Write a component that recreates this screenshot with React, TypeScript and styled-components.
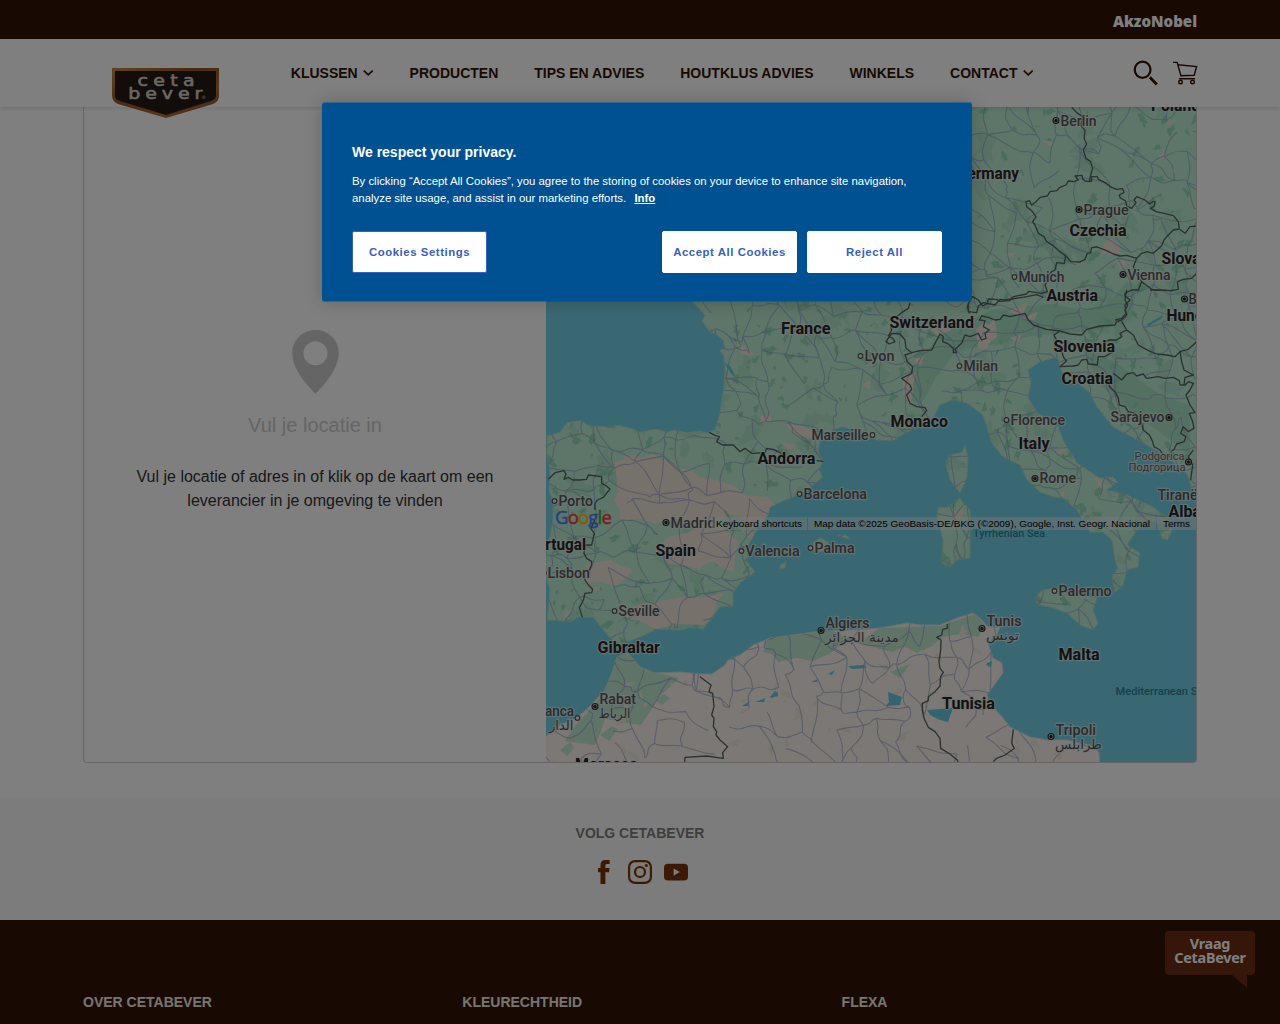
import React from "react";
import styled, { createGlobalStyle } from "styled-components";

const sans = '"Liberation Sans", Arial, sans-serif';

const GlobalStyle = createGlobalStyle`
  * { box-sizing: border-box; }
  html, body { margin: 0; height: 100%; overflow: hidden; background: #fff; }
  body { font-family: ${sans}; }
  h2, h3, p { margin: 0; font-weight: inherit; }
  button { font-family: inherit; cursor: pointer; }
`;

const Page = styled.div`
  position: relative;
  display: flex;
  flex-direction: column;
  height: 1024px;
  overflow: hidden;
`;

const Container = styled.div`
  width: 1114px;
  margin: 0 auto;
  display: flex;
`;

const TopBar = styled.div`
  height: 39px;
  background: #301404;
  flex: none;
`;

const TopBarInner = styled(Container)`
  height: 100%;
  justify-content: flex-end;
  padding-top: 11px;
`;

const Header = styled.header`
  height: 68px;
  flex: none;
  z-index: 2;
  background: #fff;
  box-shadow: 0 1px 4px rgba(0, 0, 0, 0.14);
`;

const HeaderInner = styled(Container)`
  align-items: flex-start;
`;

const LogoLink = styled.a`
  display: block;
  width: 107px;
  height: 50px;
  margin: 29px 71.8px 0 29px;
`;

const Nav = styled.nav`
  display: flex;
  gap: 36px;
  padding-top: 24px;
  flex: 1;
`;

const NavItem = styled.a`
  display: flex;
  align-items: center;
  gap: 5.4px;
  height: 20px;
  color: #301404;
  font-size: 14px;
  font-weight: 700;
  white-space: nowrap;
`;

const Tools = styled.div`
  display: flex;
  gap: 14.5px;
  padding-top: 21px;
  margin-right: -1px;
`;

const Main = styled.main`
  height: 691px;
  flex: none;
`;

const Locator = styled(Container)`
  height: 656px;
  border: 1px solid #ccc;
  border-top: 0;
  border-radius: 0 0 4px 4px;
  overflow: hidden;
`;

const Intro = styled.section`
  width: 462px;
  display: flex;
  flex-direction: column;
  align-items: center;
  padding-top: 222px;
  text-align: center;
`;

const IntroTitle = styled.h2`
  margin-top: 16px;
  font-size: 20px;
  line-height: 28px;
  color: #cbcbcb;
`;

const IntroText = styled.p`
  width: 380px;
  margin-top: 26px;
  font-size: 16px;
  line-height: 24px;
  color: #333;
`;

const MapPane = styled.section`
  position: relative;
  width: 650px;
  height: 655px;
  overflow: hidden;
`;

const GoogleMark = styled.div`
  position: absolute;
  left: 9px;
  top: 397px;
  font: 500 18.5px/26px "Open Sans", sans-serif;
  letter-spacing: -0.8px;
`;

const Tint = styled.span<{ $c: string }>`
  color: ${(p) => p.$c};
  -webkit-text-stroke: 0.5px ${(p) => p.$c};
`;

const Attribution = styled.div`
  position: absolute;
  right: 0;
  top: 410px;
  display: flex;
  gap: 1px;
  height: 13px;
`;

const Credit = styled.span<{ $w: number }>`
  width: ${(p) => p.$w}px;
  background: rgba(245, 245, 245, 0.45);
  color: #000;
  font-size: 9.97px;
  line-height: 14px;
  text-align: center;
  white-space: nowrap;
`;

const Follow = styled.section`
  height: 122px;
  flex: none;
  background: #f8f8f8;
  display: flex;
  flex-direction: column;
  align-items: center;
  padding-top: 25px;
`;

const FollowTitle = styled.h3`
  font-size: 14px;
  line-height: 20px;
  font-weight: 700;
  color: #7d7d7d;
`;

const Socials = styled.div`
  display: flex;
  gap: 12px;
  margin-top: 17px;
`;

const Footer = styled.footer`
  position: relative;
  flex: 1;
  background: #301404;
`;

const FooterInner = styled(Container)`
  padding-top: 72px;
`;

const FooterHeading = styled.h3`
  flex: 0 0 379.3px;
  &:last-child { flex: 1; }
  color: #f0e9e5;
  font-size: 14px;
  line-height: 20px;
  font-weight: 700;
  white-space: nowrap;
`;

const ChatTag = styled.div`
  position: absolute;
  top: 10.5px;
  right: 25px;
  width: 90px;
  height: 44px;
  border-radius: 4px;
  background: #6c2c10;
  color: #fff;
  text-align: center;
  padding-top: 6px;
  font: 700 14.4px/14px "Noto Sans", sans-serif;
  letter-spacing: -0.25px;
  &::after {
    content: "";
    position: absolute;
    right: 8px;
    top: 44px;
    border-top: 13px solid #6c2c10;
    border-left: 15px solid transparent;
  }
`;

const Backdrop = styled.div`
  position: absolute;
  inset: 0;
  z-index: 5;
  background: rgba(0, 0, 0, 0.5);
`;

const Consent = styled.div`
  position: absolute;
  left: 322px;
  top: 102px;
  z-index: 6;
  width: 650px;
  height: 200px;
  padding: 40.4px 30px 0;
  border: solid rgba(0, 81, 146, 0.5);
  border-width: 1px 0;
  border-radius: 2.5px;
  background: #005192 padding-box;
  color: #fff;
  box-shadow: 0 0 18px rgba(0, 0, 0, 0.2);
`;

const ConsentTitle = styled.h2`
  margin-top: -1px;
  font-size: 14px;
  line-height: 20px;
  font-weight: 700;
`;

const ConsentText = styled.p`
  margin-top: 11px;
  font-size: 11.38px;
  line-height: 17px;
  white-space: nowrap;
`;

const InfoLink = styled.a`
  margin-left: 5px;
  font-weight: 700;
  text-decoration: underline;
`;

const Actions = styled.div`
  display: flex;
  gap: 10px;
  margin-top: 24px;
`;

const ConsentButton = styled.button<{ $settings?: boolean }>`
  width: 135px;
  height: 42px;
  padding: 0;
  margin-right: ${(p) => (p.$settings ? "165px" : 0)};
  border: 1px solid ${(p) => (p.$settings ? "#3860be" : "#fff")};
  border-radius: 2px;
  background: #fff;
  color: #3860be;
  font-size: 11.38px;
  font-weight: 700;
  letter-spacing: 0.56px;
  white-space: nowrap;
`;

/* ---------- icons ---------- */

const Chevron = () => (
  <svg width="10.5" height="8" viewBox="0 0 10.5 8" fill="none" stroke="#301404" strokeWidth="1.7">
    <path d="M.8 1.6 5.2 5.8 9.7 1.6" />
  </svg>
);

const SearchIcon = () => (
  <svg width="26" height="26" viewBox="0 0 26 26" fill="none" stroke="#301404">
    <ellipse cx="9.6" cy="9.8" rx="7.9" ry="8.1" strokeWidth="2.2" />
    <path d="m16.8 17.2 7 7.2" strokeWidth="2.9" />
  </svg>
);

const CartIcon = () => (
  <svg width="25" height="25" viewBox="0 0 25 25" fill="none" stroke="#301404" strokeWidth="1.4">
    <path d="M0 2.4h4.2l3.7 13.4 13.3-.5L23.6 6.6 5 4.8M6 18.8h16" />
    <circle cx="7.5" cy="22" r="1.8" />
    <circle cx="19.5" cy="22" r="1.8" />
  </svg>
);

const PinIcon = () => (
  <svg width="48" height="66" viewBox="-.5 0 48 66">
    <path
      fill="#cbcbcb"
      fillRule="evenodd"
      d="M24 1C11 1 .8 11 .8 24 .8 40 14 54 24 65 34 54 47.2 40 47.2 24 47.2 11 37 1 24 1Zm0 11.2a12 12 0 1 1 0 24 12 12 0 0 1 0-24Z"
    />
  </svg>
);

const FacebookIcon = () => (
  <svg width="24" height="24" viewBox="0 0 24 24" fill="#78330a">
    <path d="M8.5 24V12.3H6V8h2.5V5.3C8.5 1.8 10.2 0 13.4 0h4.2v4.1H15c-1.3 0-1.6.6-1.6 1.7V8h4.2l-.6 4.3h-3.6V24Z" />
  </svg>
);

const InstagramIcon = () => (
  <svg width="24" height="24" viewBox="0 0 24 24" fill="none" stroke="#78330a" strokeWidth="2.2">
    <rect x="1.1" y="1.1" width="21.8" height="21.8" rx="6" />
    <circle cx="12" cy="12" r="5" />
    <circle cx="18.4" cy="5.6" r="1.5" fill="#78330a" stroke="none" />
  </svg>
);

const YoutubeIcon = () => (
  <svg width="24" height="24" viewBox="0 0 24 24">
    <rect y="3.8" width="24" height="16.6" rx="4" fill="#78330a" />
    <path d="m9.6 8.4 6.2 3.6-6.2 3.7Z" fill="#f8f8f8" />
  </svg>
);

const CetaLogo = () => (
  <svg width="107" height="50" viewBox="0 0 107 50">
    <defs>
      <linearGradient id="gold" x1="0" y1="0" x2="1" y2="1">
        <stop offset="0" stopColor="#c08b3a" />
        <stop offset=".4" stopColor="#935320" />
        <stop offset=".7" stopColor="#ad6d38" />
        <stop offset="1" stopColor="#7c431c" />
      </linearGradient>
    </defs>
    <path d="M0 0h107v28q0 5-6 8L54 50 6 36q-6-3-6-8Z" fill="url(#gold)" />
    <path d="M3 3h101v25q0 3-5 5L54 47 8 33q-5-2-5-5Z" fill="#241a15" />
    <g fill="#d6d0c6" stroke="#d6d0c6" strokeWidth=".6" fontFamily='"DejaVu Sans", sans-serif' fontSize="16.5">
      <text transform="translate(25.6 18) scale(1.15 1)" textLength="49.5">ceta</text>
      <text transform="translate(16.2 31) scale(1.15 1)" textLength="64.5">bever</text>
      <text x="89.5" y="31" fontSize="4.5" strokeWidth="0">®</text>
    </g>
  </svg>
);

const AkzoLogo = () => (
  <svg width="85" height="22" viewBox="0 0 85 22">
    <text
      x="1" y="16.3" fill="#fff"
      fontFamily='"Open Sans", sans-serif' fontWeight="800" fontSize="15.5"
      textLength="84" lengthAdjust="spacingAndGlyphs"
    >
      AkzoNobel
    </text>
  </svg>
);

/* ---------- map ---------- */

const EUROPE =
  "M680 90L690 298 693 302 705 315 702 321 710 332 716 334 723 340 725 348 720 350 724 357 725 372 724 387 720 413 715 430 707 433 700 431 687 433 673 430 667 432 655 429 640 432 630 428 618 425 610 427 587 425 582 421 575 421 567 423 560 432 547 436 547 457 550 472 549 490 553 503 553 520 550 535 546 555 546 577 550 590 547 620 560 621 570 622 578 617 593 617 605 632 610 638 620 644 630 641 640 637 657 629 680 630 692 627 703 629 710 620 720 607 733 606 733 593 740 583 755 572 748 563 747 547 757 530 768 515 770 507 790 498 803 493 823 477 819 470 823 460 818 453 820 442 833 430 842 427 853 430 867 437 877 440 893 441 907 432 923 425 933 418 940 405 952 400 967 403 983 415 988 430 992 443 1003 457 1020 465 1027 480 1040 492 1053 497 1063 498 1077 510 1090 532 1103 532 1112 540 1115 560 1118 568 1112 577 1115 592 1123 585 1127 570 1138 567 1140 553 1127 545 1137 530 1145 520 1157 522 1162 538 1168 540 1172 530 1170 520 1153 507 1127 495 1107 490 1118 482 1113 477 1100 478 1077 463 1063 440 1057 423 1037 413 1028 397 1031 383 1028 370 1040 362 1057 357 1060 367 1067 382 1074 380 1090 393 1097 407 1113 427 1143 443 1167 457 1187 474 1192 490 1200 510V90Z";
const AFRICA =
  "M540 741L560 725 577 718 590 706 605 690 613 670 617 657 628 653 640 667 655 673 680 672 700 674 712 674 725 665 728 660 740 655 753 645 770 638 800 634 820 631 850 630 880 628 907 623 920 625 940 625 957 618 973 613 982 620 988 627 1000 627 997 635 988 643 993 658 1002 663 1003 673 987 695 993 707 1003 718 1010 727 1030 737 1047 740 1067 740 1090 745 1099 752 1100 770H540Z";
const ISLANDS =
  "M965 445l3 12-1 20-7 16-10-13-4-17 4-8 12-3ZM960 498l10 12v48l-13 2-7 7-8-4 1-23-6-23 1-9 10-1ZM1035 598l7-8 15-2 10 5 30 5-4 12 5 13-5 7-13-5-13-12-17-6-12-2ZM808 546l12-8 9 4-5 9-11 2ZM780 565l6-3-1 6-5 1ZM838 536l8-1 4 4Z";

const ARID = [
  "M615 462l12-3 6-5 9 4 12-4 6 6 12 1 8 8 12 1 8 7 20 4 14 5 12 9 22 2 9 10-9 6-5 9-12 4-12-9-11-3-10 8-10 5-40-5-14 2-12-5-21 1-2-12-5-7 4-8Z",
  "M660 545l10-9 18-3 14-10 18 2 8 8 11 9-4 14-1 16-10-3-10-7-8 1-7 6-16-4-14-1ZM586 566l10-4 15-2 10 6 12 3-6 9-11 8-14-4-16 1ZM621 612l20-8 18-2 22-5 22 0 21-4-8 9-2 11-10 12-24-1-26 5-13-8-13-2Z",
  "M738 345l9 2 8 9-14-2ZM760 417l10-3 2 7-10 2ZM784 424l14 1 14 5 8 6-12 2-12-3ZM903 375l12-2-4 32-8-10ZM862 385l8-5v10ZM976 330l8-8 5 3 6-8 2 20-6 4-5 8-8 0ZM1008 312l20-10-6 14ZM1010 338l12-4-4 8Z",
  "M1104 243l8-4 8 5-1 10-8 2-4-3-6 3ZM1117 262l8-2 2 7-7 2ZM1004 254l12-2-4 5ZM1042 140l12 2-4 5ZM1165 123l9-3-4 6ZM1158 156l8-4-3 8ZM1170 170l6 1-3 3ZM1020 318l18-6-4 8ZM930 330l14-6 8 6-14 6ZM914 360l10-4-4 10Z",
];
const WET = [
  "M617 655l12-1 6 8 10 8 34 8-9 9-13 11-6 12-10 15-14-2-22-4-4 12-6 14-14-2-16-2 9-14 13-14 8-9 8-10Z",
  "M770 638l20-2 40-6 22 10-14 7-9 7-16 7-16-3-19 4-6-8-9-2ZM858 643l22-15 60-2 35-12 10 11-7 12-17-3-18 3-11 9-15 7-12-6-13 5Z",
  "M890 672l20-8-10 14ZM655 700l9-6 6 4-8 7ZM600 735l12-9 6 3-9 12ZM560 750l10-8 4 6-7 8Z",
];

const BORDERS: { at: [number, number]; d: string[] }[] = [
  {
    at: [960, 100],
    d: [
      "M335 22L350 38 368 50 362 75 375 92 372 115 380 132 370 150 378 175 392 185 398 205 392 225 388 245",
      "M388 245L375 243 368 236 366 226 345 228 355 240 342 245 325 243 318 255 300 262 290 272 270 275 262 288 240 292 228 305 215 315 208 302 198 305 200 320 215 332 228 350 218 365 225 375 235 400 252 410 260 425 280 437 300 455 317 467 332 485 360 486 375 478 382 460 392 458 395 443 410 441 440 452 460 462 480 468 500 466 530 475 545 460 562 455 580 460 605 437 612 420 622 408 640 390 658 387 655 365 640 347 612 340 588 335 572 325 583 318 585 305 578 305 568 312 555 300 530 290 522 300 528 308 515 325 500 318 497 303 480 293 478 285 492 277 488 266 470 268 455 262 430 245 415 238 412 230 395 230 395 243 388 245",
      "M317 467L313 490 290 488 285 510 275 515 260 530 262 545 255 555 262 575 245 580 205 574 200 582 160 590 148 602 120 604 110 598 85 597 82 610 68 618 55 600 38 590 28 605 22 620 28 640",
      "M658 387L675 400 690 380 710 378M530 475L520 500 530 525 545 545 535 570 515 570 495 580 495 588 510 600 495 615 498 640 485 655 465 660M545 545L575 568 630 572 655 568 652 545 670 538 695 535 710 520",
    ],
  },
  {
    at: [860, 290],
    d: [
      "M325 40L325 65 350 68 355 48 370 38 405 45 420 28 435 30 500 20 530 14 550 22",
      "M800 0L795 30 803 45 795 60 800 75 785 90 770 95 765 105 720 108 680 118 665 135 630 132 600 123 560 118 520 105 505 90 495 70 450 80 430 75 420 88 405 90 385 82 365 78 358 90 375 92 370 110 388 120 375 130 378 145 365 150 355 130 330 140 315 135 305 160 285 178 290 188 280 188 280 175 262 160 248 155 250 140 240 132 225 160 215 180 180 182 155 188 138 175 135 150 120 132 95 130 78 155 88 162 105 155 98 145 85 138 95 120 92 110",
      "M150 38L145 55 125 68 110 80M155 188L135 195 142 215 158 230 155 250 125 265 150 285 155 298 140 315 150 340 170 350 195 353 200 362 185 380",
      "M600 123L582 135 590 150 585 165 605 185 612 205 620 212 600 230 640 228 655 225 665 210 680 208 685 222 712 225 715 200 735 200 760 185",
      "M785 95L800 120 820 135 835 165 865 182 890 192 920 195 945 200 960 185 985 178 1010 155M800 120L780 130 785 140 770 150 745 150 730 160",
      "M760 250L785 270 800 252 820 248 830 258 850 252 860 265 895 260 915 265 940 262 958 272 960 285 975 285 985 275 1000 280 990 300 978 315 990 345 1005 368 988 370 998 395 1002 415 985 425 970 410 962 430 978 440 972 455 950 462 942 478 930 490",
      "M745 260L748 290 765 305 775 325 778 345 795 350 805 365 825 370 830 385 845 400 850 420 868 435 878 455 882 470 900 480 908 492 930 500M1000 480L985 500 998 525 992 570M960 185L965 215 972 240 1000 255 975 262 972 285",
      "M870 0L940 2",
    ],
  },
  {
    at: [540, 290],
    d: [
      "M508 427L525 436 538 440 530 455 548 465 580 465 590 475 600 485 615 475 635 490 675 488 680 475 700 478 720 488 735 505M830 512L850 514",
      "M25 568L45 548 72 542 78 552 72 568 85 562 98 570 120 570 140 568 145 555 185 560 185 580 195 585 210 597 190 622 172 630 165 640 165 660",
    ],
  },
  {
    at: [540, 510],
    d: [
      "M165 30L152 55 163 70 155 105 135 105 132 130 140 145 155 155 155 165 148 180 130 185 135 210 145 225 158 238 155 248 135 250 130 270 118 293 127 322",
      "M480 500L513 525 507 545 518 550 520 570 522 590 515 615 522 625 520 650 530 665 528 675 540 690 563 710 548 728 550 745 500 738 435 742 434 760",
    ],
  },
  {
    at: [860, 510],
    d: [
      "M262 342L262 355 248 358 245 375 230 382 243 390 242 420 237 455 240 475 250 487 242 500 240 528 225 545 205 560 205 572 187 580 187 600 192 625 205 652 225 665 240 685 242 715 270 732 292 750 295 760",
      "M460 658L455 700 463 715 435 735 410 745 400 755",
    ],
  },
];

const LAKES =
  "M927 710l26-2-5 14-8-2-10-5ZM888 692l14 5-2 8-14 1 3-4ZM770 697l5-6 3 2 0 3-7 2ZM742 706l8-5-2 5ZM755 702l10-4-1 4ZM811 682l7-3-1 3ZM828 674l7-4-3 5ZM848 666l16-1 2 3-14 1ZM987 663l5-2-1 6-5-2ZM1146 325l17-10-2 4-12 7ZM892 334l12-4-6 4ZM994 358l4-9 1 2ZM724 362l7 5 6 13-7-8Z";

// Small deterministic generator, so the road net and woods stay the same on every render.
const makeRandom = (seed: number) => () => {
  seed = (seed * 1664525 + 1013904223) % 4294967296;
  return seed / 4294967296;
};

const buildRoads = () => {
  const rnd = makeRandom(41);
  const step = 22;
  const cols = 32;
  const rows = 32;
  const pts = Array.from({ length: cols * rows }, (_, i) => [
    530 + (i % cols) * step + (rnd() - 0.5) * 20,
    90 + Math.floor(i / cols) * step + (rnd() - 0.5) * 20,
  ]);
  let d = "";
  const join = (a: number, b: number) => {
    const [x1, y1] = pts[a];
    const [x2, y2] = pts[b];
    const j = () => (rnd() - 0.5) * 13;
    const mx = (x1 + x2) / 2;
    const my = (y1 + y2) / 2;
    d += `M${x1.toFixed(1)} ${y1.toFixed(1)}C${(mx + j()).toFixed(1)} ${(my + j()).toFixed(1)} ${(mx + j()).toFixed(1)} ${(my + j()).toFixed(1)} ${x2.toFixed(1)} ${y2.toFixed(1)}`;
  };
  for (let r = 0; r < rows - 1; r++)
    for (let c = 0; c < cols - 1; c++) {
      const i = r * cols + c;
      const keep = r > 27 ? 0.38 : 0.72;
      if (rnd() < keep) join(i, i + 1);
      if (rnd() < keep) join(i, i + cols);
      if (rnd() < keep * 0.35) join(i, i + cols + 1);
    }
  return d;
};

const buildPatches = (seed: number, count: number, y0: number, y1: number, size: number) => {
  const rnd = makeRandom(seed);
  let d = "";
  for (let n = 0; n < count; n++) {
    const cx = 546 + rnd() * 650;
    const cy = y0 + rnd() * (y1 - y0);
    const s = size * (0.3 + rnd());
    const tilt = rnd() * 3;
    for (let k = 0; k < 15; k++) {
      const a = (k / 15) * Math.PI * 2;
      const rad = s * (0.4 + rnd() * 0.85);
      const px = Math.cos(a) * rad * 1.4;
      const py = Math.sin(a) * rad * 0.75;
      const x = cx + px * Math.cos(tilt) - py * Math.sin(tilt);
      const y = cy + px * Math.sin(tilt) + py * Math.cos(tilt);
      d += `${k ? "L" : "M"}${x.toFixed(1)} ${y.toFixed(1)}`;
    }
    d += "Z";
  }
  return d;
};

const roads = buildRoads();
const woods = buildPatches(7, 620, 100, 650, 4.4);
const paleWoods = buildPatches(19, 210, 100, 640, 11);
const alpine = "M905 400l6-30 30-36 50-24 60-6 30 6 26-6 20-22 10 4-6 34-30 10-70 6-44 10-30 4-20 26-16 28ZM1080 345l40 20 40 30 30 10v50l-40-30-50-40ZM1040 225l34 36-14 4-28-30Z";
const sandSpots = buildPatches(23, 40, 440, 625, 5);
const africaSpots = buildPatches(31, 80, 630, 762, 4);

type Label = [text: string, x: number, y: number, width: number];

const COUNTRIES: Label[] = [
  ["Poland", 1151, 111, 49], ["Germany", 957, 179, 62], ["Czechia", 1069.5, 235.5, 57],
  ["Slovakia", 1161.5, 263.5, 60], ["Austria", 1046.5, 301, 51.5], ["Hungary", 1166.5, 320.5, 59],
  ["France", 781, 333.5, 49.5], ["Switzerland", 889.5, 327.5, 84.5], ["Slovenia", 1053.5, 351.5, 61.5],
  ["Croatia", 1061.5, 384, 51.5], ["Monaco", 890.5, 427, 57.5], ["Italy", 1018.5, 449, 31],
  ["Andorra", 757.5, 463.5, 58], ["Albania", 1168.5, 517, 54], ["Portugal", 527, 550, 59],
  ["Spain", 655.5, 556, 40.5], ["Gibraltar", 597.5, 653, 62.5], ["Malta", 1058.5, 660, 41],
  ["Tunisia", 942, 709, 53], ["Morocco", 575, 769.5, 63],
];

const CITIES: Label[] = [
  ["Berlin", 1060.5, 126.5, 36], ["Prague", 1083.5, 215.5, 45], ["Munich", 1018.5, 282.5, 46],
  ["Vienna", 1127.5, 280.5, 43], ["Budapest", 1188.5, 304, 55], ["Lyon", 864.5, 361.5, 30],
  ["Milan", 963.5, 371.5, 34.5], ["Marseille", 811.5, 440.5, 57], ["Florence", 1010.5, 425.5, 54.5],
  ["Sarajevo", 1110.5, 422.5, 54], ["Rome", 1039.5, 483.5, 36.5], ["Barcelona", 803.5, 499.5, 63.5],
  ["Porto", 558.5, 506.5, 34.5], ["Madrid", 670.5, 528.5, 45], ["Valencia", 745.5, 556.5, 54],
  ["Palma", 814.5, 553.5, 40], ["Lisbon", 547.5, 578.5, 42.5], ["Seville", 618.5, 616.5, 41],
  ["Algiers", 825.5, 628.5, 44], ["Tunis", 986.5, 626.5, 35], ["Palermo", 1058.5, 596.5, 53],
  ["Tiranë", 1157.5, 500.5, 40], ["Rabat", 599.5, 704.5, 36.5], ["anca", 545, 716.5, 29],
  ["Tripoli", 1055.5, 735.5, 40.5],
];

const LOCAL: Label[] = [
  ["مدينة الجزائر", 825, 642, 74], ["تونس", 986, 640, 33], ["الرباط", 598.5, 718, 32],
  ["الدار", 549, 730, 24.5], ["طرابلس", 1055, 749, 47],
];

const DOTS: [number, number][] = [
  [1014.5, 277], [860.5, 356], [959.5, 366], [872.5, 435], [1006.5, 420], [799.5, 494],
  [554.5, 501], [741.5, 551], [810.5, 548], [544, 573], [614.5, 611], [1054.5, 591], [577.5, 718],
];
const CAPITALS: [number, number][] = [
  [1056, 120.5], [1079, 209.5], [1123, 274.5], [1184.5, 299], [1169, 417.5], [1035, 478.5],
  [666, 522.5], [821, 630.5], [982, 628.5], [595, 706.5], [1051, 736.5], [1188.5, 462],
];

const MapDrawing = () => (
  <svg width="650" height="655" viewBox="546 107 650 655" fontFamily="Roboto, sans-serif">
    <defs>
      <clipPath id="land"><path d={EUROPE + AFRICA + ISLANDS} /></clipPath>
      <clipPath id="europe"><path d={EUROPE + ISLANDS} /></clipPath>
      <clipPath id="africa"><path d={AFRICA} /></clipPath>
    </defs>
    <path d="M546 107h650v655H546Z" fill="#75d0e4" />
    <path d={EUROPE + ISLANDS} fill="#bcebd3" stroke="#a9d8cb" />
    <path d={AFRICA} fill="#f8f1ec" stroke="#cfe0dc" />
    <g clipPath="url(#europe)">
      <path d={paleWoods} fill="#afe3cb" />
      <path d={alpine} fill="#a0dcc0" opacity=".7" />
      <path d={woods} fill="#97d9b9" />
      {ARID.map((d) => <path key={d} d={d} fill="#eee2d8" />)}
      <path d={sandSpots} fill="#eee3d8" opacity=".75" />
    </g>
    <g clipPath="url(#africa)">
      {WET.map((d) => <path key={d} d={d} fill="#bfe6cf" />)}
      <path d={africaSpots} fill="#eee7da" />
    </g>
    <path d={roads} clipPath="url(#land)" fill="none" stroke="#8c9cc4" strokeWidth="1.1" opacity=".6" />
    <path d={LAKES} fill="#69c8de" />
    {BORDERS.map((b) => (
      <g
        key={b.at.join()} transform={`translate(${b.at[0]} ${b.at[1]}) scale(.33333)`}
        fill="none" stroke="#56635f" strokeWidth="4" strokeLinejoin="round"
      >
        {b.d.map((d) => <path key={d} d={d} />)}
      </g>
    ))}
    <g fill="#e8efec" stroke="#555" strokeWidth="1.2">
      {DOTS.map(([x, y]) => <circle key={x} cx={x} cy={y} r="2.3" />)}
    </g>
    {CAPITALS.map(([x, y]) => (
      <g key={x}>
        <circle cx={x} cy={y} r="3" fill="#a9b5b1" stroke="#333" strokeWidth="1.1" />
        <circle cx={x} cy={y} r="1.6" fill="#222" />
      </g>
    ))}
    <g stroke="#e0ebe7" strokeOpacity=".7" strokeWidth="2.4" strokeLinejoin="round" paintOrder="stroke">
      <g fontSize="14.2" fontWeight="500" fill="#565656" transform="translate(0 -.4)">
        {CITIES.map(([t, x, y, w]) => (
          <text key={t} x={x} y={y} textLength={w} lengthAdjust="spacingAndGlyphs">{t}</text>
        ))}
      </g>
      <g fontSize="13" fill="#555" fontFamily='"DejaVu Sans", sans-serif'>
        {LOCAL.map(([t, x, y, w]) => (
          <text key={t} x={x} y={y} textLength={w} lengthAdjust="spacingAndGlyphs">{t}</text>
        ))}
      </g>
      <g fontSize="11" fill="#606060">
        <text x="1134.5" y="459.5" textLength="50" lengthAdjust="spacingAndGlyphs">Podgorica</text>
        <text x="1128.5" y="470.8" textLength="57" lengthAdjust="spacingAndGlyphs">Подгорица</text>
      </g>
      <g fontSize="16.4" fontWeight="700" fill="#262626" transform="translate(0 .3)">
        {COUNTRIES.map(([t, x, y, w]) => (
          <text key={t} x={x} y={y} textLength={w} lengthAdjust="spacingAndGlyphs">{t}</text>
        ))}
      </g>
    </g>
    <g fontSize="11.2" fill="#2b8296" fontWeight="500">
      <text x="973" y="536.5" textLength="72" lengthAdjust="spacingAndGlyphs">Tyrrhenian Sea</text>
      <text x="1115.5" y="695" textLength="94" lengthAdjust="spacingAndGlyphs">Mediterranean Sea</text>
    </g>
  </svg>
);

const GOOGLE: [string, string][] = [
  ["G", "#4285f4"], ["o", "#ea4335"], ["o", "#fbbc04"], ["g", "#4285f4"], ["l", "#34a853"], ["e", "#ea4335"],
];

const NAV = [
  { label: "KLUSSEN", menu: true },
  { label: "PRODUCTEN" },
  { label: "TIPS EN ADVIES" },
  { label: "HOUTKLUS ADVIES" },
  { label: "WINKELS" },
  { label: "CONTACT", menu: true },
];

export default function App() {
  return (
    <Page>
      <GlobalStyle />
      <TopBar>
        <TopBarInner><AkzoLogo /></TopBarInner>
      </TopBar>
      <Header>
        <HeaderInner>
          <LogoLink><CetaLogo /></LogoLink>
          <Nav>
            {NAV.map((n) => (
              <NavItem key={n.label}>{n.label}{n.menu && <Chevron />}</NavItem>
            ))}
          </Nav>
          <Tools><SearchIcon /><CartIcon /></Tools>
        </HeaderInner>
      </Header>
      <Main>
        <Locator>
          <Intro>
            <PinIcon />
            <IntroTitle>Vul je locatie in</IntroTitle>
            <IntroText>
              Vul je locatie of adres in of klik op de kaart om een leverancier in je omgeving te vinden
            </IntroText>
          </Intro>
          <MapPane>
            <MapDrawing />
            <GoogleMark>
              {GOOGLE.map(([ch, c], i) => <Tint key={i} $c={c}>{ch}</Tint>)}
            </GoogleMark>
            <Attribution>
              <Credit $w={96}>Keyboard shortcuts</Credit>
              <Credit $w={348}>Map data ©2025 GeoBasis-DE/BKG (©2009), Google, Inst. Geogr. Nacional</Credit>
              <Credit $w={39}>Terms</Credit>
            </Attribution>
          </MapPane>
        </Locator>
      </Main>
      <Follow>
        <FollowTitle>VOLG CETABEVER</FollowTitle>
        <Socials><FacebookIcon /><InstagramIcon /><YoutubeIcon /></Socials>
      </Follow>
      <Footer>
        <FooterInner>
          <FooterHeading>OVER CETABEVER</FooterHeading>
          <FooterHeading>KLEURECHTHEID</FooterHeading>
          <FooterHeading>FLEXA</FooterHeading>
        </FooterInner>
        <ChatTag>Vraag<br />CetaBever</ChatTag>
      </Footer>
      <Backdrop />
      <Consent>
        <ConsentTitle>We respect your privacy.</ConsentTitle>
        <ConsentText>
          By clicking “Accept All Cookies”, you agree to the storing of cookies on your device to enhance site navigation,
          <br />
          analyze site usage, and assist in our marketing efforts. <InfoLink>Info</InfoLink>
        </ConsentText>
        <Actions>
          <ConsentButton $settings>Cookies Settings</ConsentButton>
          <ConsentButton>Accept All Cookies</ConsentButton>
          <ConsentButton>Reject All</ConsentButton>
        </Actions>
      </Consent>
    </Page>
  );
}
